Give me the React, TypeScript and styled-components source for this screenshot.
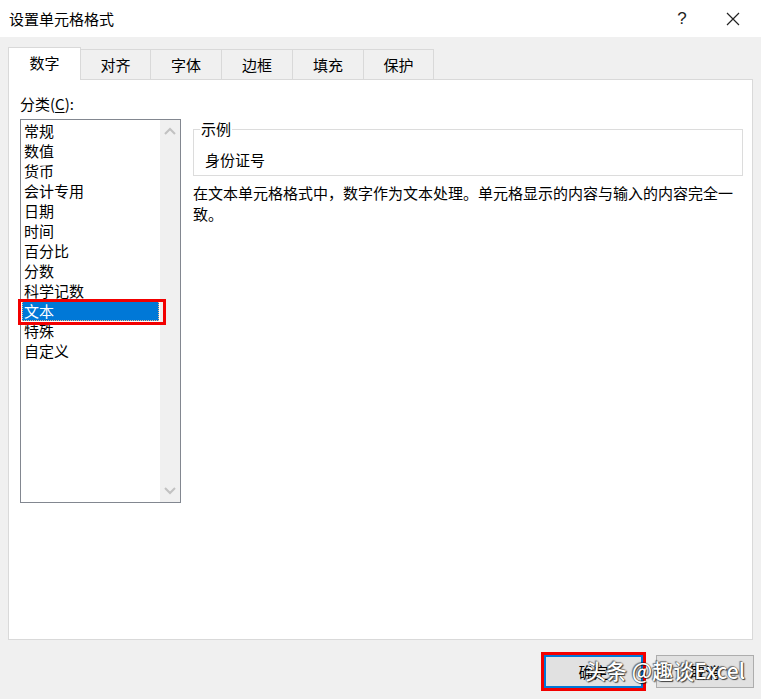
import React from "react";
import styled, { createGlobalStyle, css } from "styled-components";

const GlobalStyle = createGlobalStyle`
  html, body {
    margin: 0;
    padding: 0;
    background: #ffffff;
  }
  body {
    font-family: "Noto Sans CJK SC", "Noto Sans", sans-serif;
    font-size: 15px;
    color: #000;
  }
`;

const TABS = [
  { label: "数字", width: 73 },
  { label: "对齐", width: 71 },
  { label: "字体", width: 72 },
  { label: "边框", width: 72 },
  { label: "填充", width: 72 },
  { label: "保护", width: 71 },
];

const CATEGORIES = [
  "常规",
  "数值",
  "货币",
  "会计专用",
  "日期",
  "时间",
  "百分比",
  "分数",
  "科学记数",
  "文本",
  "特殊",
  "自定义",
];

const SELECTED = "文本";

const Window = styled.div`
  position: relative;
  width: 761px;
  height: 699px;
  display: flex;
  flex-direction: column;
  overflow: hidden;
`;

const TitleBar = styled.div`
  height: 37px;
  flex-shrink: 0;
  display: flex;
  align-items: center;
  background: #ffffff;
  padding-left: 9px;
`;

const Title = styled.div`
  flex: 1;
  font-size: 15px;
  line-height: 20px;
  color: #000;
`;

const TitleButton = styled.div<{ $w: number }>`
  width: ${(p) => p.$w}px;
  height: 37px;
  display: flex;
  align-items: center;
  justify-content: center;
  font-family: "Liberation Sans", sans-serif;
  font-size: 17px;
  color: #222;
`;

const Body = styled.div`
  flex: 1;
  display: flex;
  flex-direction: column;
  background: #f0f0f0;
  padding: 10px 8px 0 8px;
`;

const TabStrip = styled.div`
  height: 32px;
  display: flex;
  align-items: flex-end;
  position: relative;
  z-index: 1;
`;

const Tab = styled.div<{ $active?: boolean; $w: number }>`
  width: ${(p) => p.$w}px;
  height: 30px;
  box-sizing: border-box;
  display: flex;
  align-items: center;
  justify-content: center;
  border: 1px solid #d9d9d9;
  border-bottom: none;
  margin-left: -1px;
  background: #f0f0f0;
  font-size: 15px;
  line-height: 20px;
  color: #000;
  &:first-child {
    margin-left: 0;
  }
  ${(p) =>
    p.$active &&
    css`
      height: 33px;
      margin-bottom: -1px;
      background: #ffffff;
      padding-bottom: 2px;
      position: relative;
      z-index: 2;
    `}
`;

const Panel = styled.div`
  height: 561px;
  box-sizing: border-box;
  background: #ffffff;
  border: 1px solid #d9d9d9;
  padding: 14px 9px 0 11px;
  display: flex;
  flex-direction: column;
`;

const FieldLabel = styled.div`
  font-size: 15px;
  line-height: 20px;
  margin-bottom: 5px;
  u {
    text-decoration: underline;
    text-underline-offset: 2px;
  }
`;

const Row = styled.div`
  display: flex;
  gap: 12px;
`;

const ListBox = styled.div`
  width: 161px;
  height: 384px;
  box-sizing: border-box;
  border: 1px solid #828790;
  display: flex;
`;

const ListItems = styled.div`
  flex: 1;
  padding-top: 1px;
`;

const ListItem = styled.div<{ $selected?: boolean }>`
  height: 20px;
  line-height: 20px;
  padding-left: 2px;
  margin: 0 2px 0 1px;
  font-size: 15px;
  color: #000;
  white-space: nowrap;
  ${(p) =>
    p.$selected &&
    css`
      position: relative;
      z-index: 3;
      background: #0078d7;
      color: #ffffff;
      box-sizing: border-box;
      border: 1px dotted #f2b98a;
      line-height: 18px;
      padding-left: 1px;
      margin-right: 1px;
      margin-left: 1px;
      &::after {
        content: "";
        position: absolute;
        left: -5px;
        right: -8px;
        top: -3px;
        bottom: -5px;
        border: 3px solid #f20000;
        pointer-events: none;
      }
    `}
`;

const ScrollBar = styled.div`
  width: 20px;
  background: #f0f0f0;
  display: flex;
  flex-direction: column;
  justify-content: space-between;
  align-items: center;
  padding: 7px 0 7px;
`;

const RightColumn = styled.div`
  flex: 1;
`;

const Sample = styled.fieldset`
  margin: 0;
  padding: 11px 11px 5px;
  border: 1px solid #dcdcdc;
  min-width: 0;
`;

const SampleLegend = styled.legend`
  padding: 0 1px;
  margin-left: -5px;
  font-size: 15px;
  line-height: 20px;
`;

const SampleValue = styled.div`
  font-size: 15px;
  line-height: 20px;
`;

const Description = styled.p`
  margin: 6px 0 0;
  font-size: 15px;
  line-height: 21px;
`;

const Footer = styled.div`
  display: flex;
  justify-content: flex-end;
  gap: 13px;
  padding: 15px 0 0 0;
  margin-right: -1px;
`;

const Button = styled.div<{ $default?: boolean }>`
  width: 98px;
  height: 33px;
  box-sizing: border-box;
  display: flex;
  align-items: center;
  justify-content: center;
  background: #e1e1e1;
  border: 1px solid #adadad;
  font-size: 15px;
  color: #000;
  ${(p) =>
    p.$default &&
    css`
      width: 99px;
      border: 2px solid #0078d7;
      outline: 3px solid #f20000;
      outline-offset: 0px;
    `}
`;

const Watermark = styled.div`
  position: absolute;
  left: 585px;
  top: 656px;
  font-family: "Noto Sans CJK SC", "Liberation Sans", sans-serif;
  font-size: 21px;
  font-weight: 500;
  line-height: 28px;
  color: #ffffff;
  white-space: nowrap;
  text-shadow: 0 0 1px #222, 1px 1px 1px rgba(0, 0, 0, 0.7), -1px -1px 1px rgba(0, 0, 0, 0.45);
  pointer-events: none;
`;

const Chevron = ({ up }: { up?: boolean }) => (
  <svg width="12" height="8" viewBox="0 0 12 8">
    <polyline
      points={up ? "1,7 6,2 11,7" : "1,1 6,6 11,1"}
      fill="none"
      stroke="#c2c2c2"
      strokeWidth="2"
    />
  </svg>
);

const CloseIcon = () => (
  <svg width="14" height="14" viewBox="0 0 14 14">
    <path d="M1 1 L13 13 M13 1 L1 13" stroke="#222" strokeWidth="1.2" fill="none" />
  </svg>
);

const App = () => {
  return (
    <Window>
      <GlobalStyle />
      <TitleBar>
        <Title>设置单元格格式</Title>
        <TitleButton $w={46}>?</TitleButton>
        <TitleButton $w={56}>
          <CloseIcon />
        </TitleButton>
      </TitleBar>
      <Body>
        <TabStrip>
          {TABS.map((t, i) => (
            <Tab key={t.label} $w={t.width} $active={i === 0}>
              {t.label}
            </Tab>
          ))}
        </TabStrip>
        <Panel>
          <FieldLabel>
            分类(<u>C</u>):
          </FieldLabel>
          <Row>
            <ListBox>
              <ListItems>
                {CATEGORIES.map((c) => (
                  <ListItem key={c} $selected={c === SELECTED}>
                    {c}
                  </ListItem>
                ))}
              </ListItems>
              <ScrollBar>
                <Chevron up />
                <Chevron />
              </ScrollBar>
            </ListBox>
            <RightColumn>
              <Sample>
                <SampleLegend>示例</SampleLegend>
                <SampleValue>身份证号</SampleValue>
              </Sample>
              <Description>
                在文本单元格格式中，数字作为文本处理。单元格显示的内容与输入的内容完全一致。
              </Description>
            </RightColumn>
          </Row>
        </Panel>
        <Footer>
          <Button $default>确定</Button>
          <Button>取消</Button>
        </Footer>
      </Body>
      <Watermark>头条 @趣谈Excel</Watermark>
    </Window>
  );
};

export default App;
